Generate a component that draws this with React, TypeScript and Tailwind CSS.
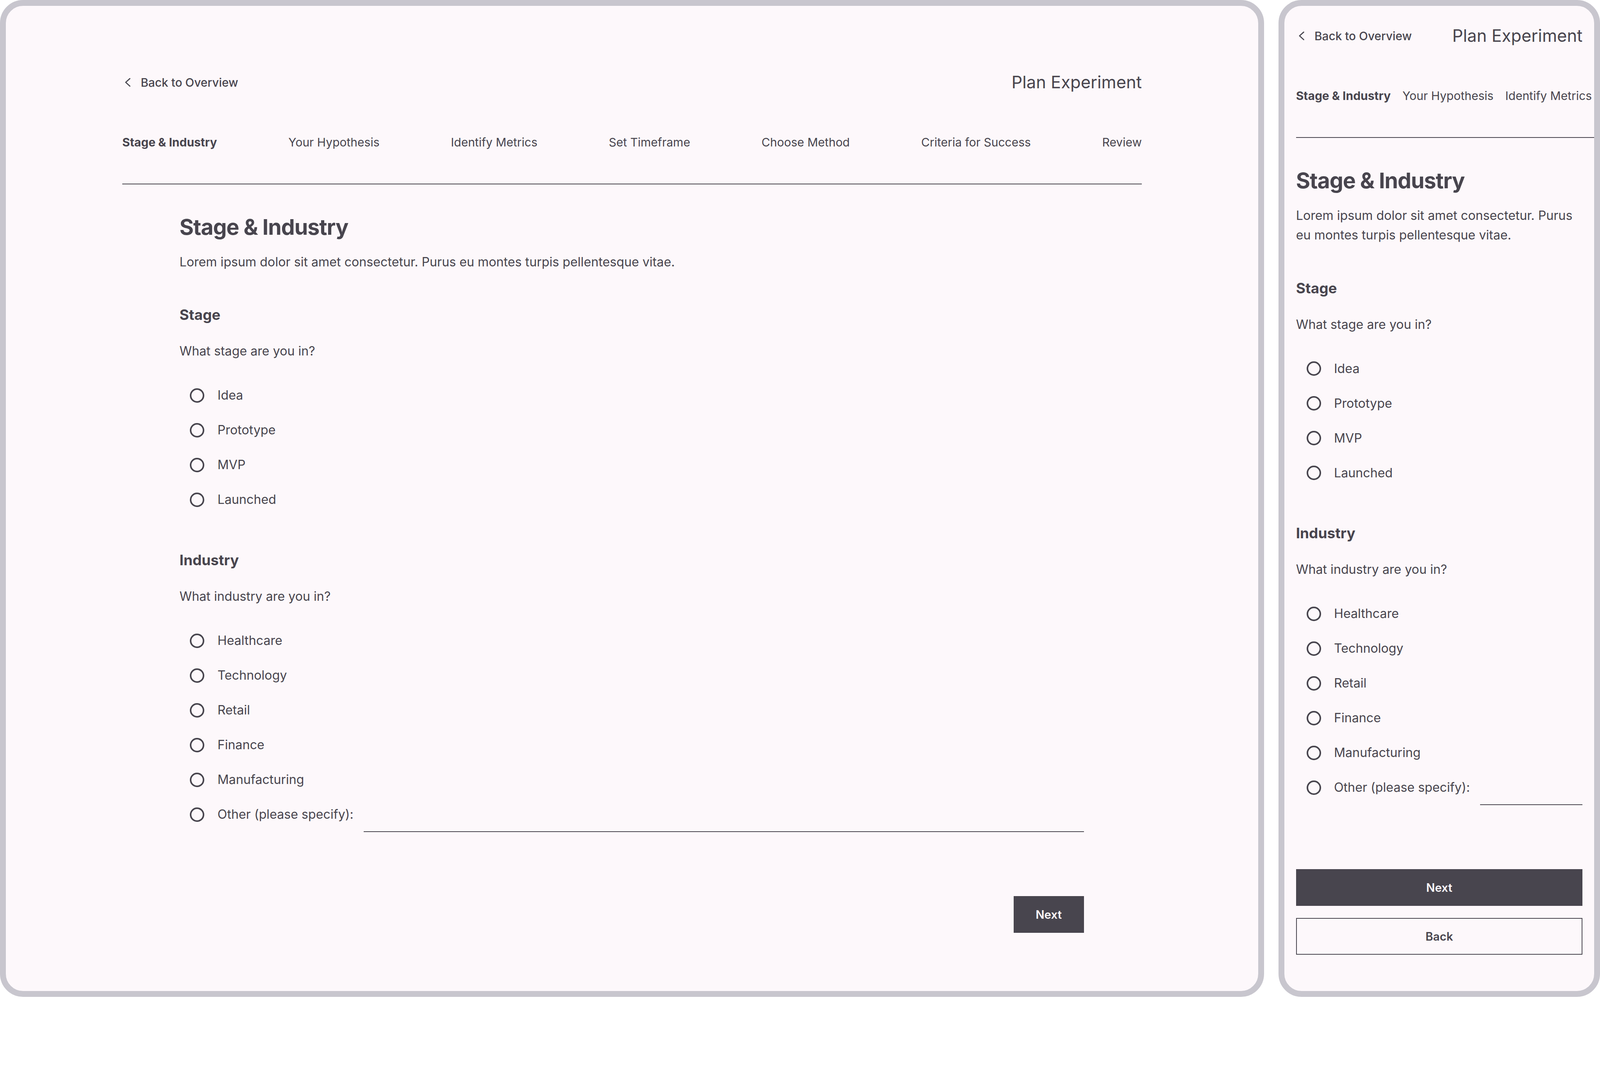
import React from "react";

const Chevron = () => (
  <svg width="29.7" height="29.7" viewBox="0 0 32 32" fill="none" className="shrink-0">
    <path d="M21 5.5 L9.5 16 L21 26.5" stroke="#48454e" strokeWidth="3" strokeLinecap="round" strokeLinejoin="round" />
  </svg>
);

const Radio = ({ label }: { label: string }) => (
  <div className="flex h-[89px] items-center pl-[26.9px]">
    <span className="h-[37px] w-[37px] shrink-0 rounded-full border-[4px] border-[#48454e]" />
    <span className="ml-[33.4px] text-[32.2px] leading-[50px]">{label}</span>
  </div>
);

const OtherRadio = () => (
  <div className="flex h-[89px] items-center pl-[26.9px]">
    <span className="h-[37px] w-[37px] shrink-0 rounded-full border-[4px] border-[#48454e]" />
    <span className="ml-[33.4px] shrink-0 text-[32.2px] leading-[50px]">Other (please specify):</span>
    <div className="ml-[26px] flex-1 self-stretch border-b-2 border-[#48454e]" />
  </div>
);

const tabs = [
  "Stage & Industry",
  "Your Hypothesis",
  "Identify Metrics",
  "Set Timeframe",
  "Choose Method",
  "Criteria for Success",
  "Review",
];

const Header = () => (
  <div className="flex h-[59px] items-center justify-between">
    <div className="flex items-center gap-[17.6px]">
      <Chevron />
      <span className="text-[29.8px] font-medium leading-[44px]">Back to Overview</span>
    </div>
    <span className="text-[43.5px] leading-[59px]">Plan Experiment</span>
  </div>
);

const FormBody = () => (
  <>
    <h1 className="mt-[76px] text-[55.6px] font-bold leading-[66.8px] tracking-[-0.02em]">
      Stage &amp; Industry
    </h1>
    <p className="mt-[31.6px] text-[32.2px] leading-[50px]">
      Lorem ipsum dolor sit amet consectetur. Purus eu montes turpis pellentesque vitae.
    </p>

    <h2 className="mt-[84.4px] text-[37px] font-bold leading-[52px]">Stage</h2>
    <p className="mt-[42px] text-[32.2px] leading-[50px]">What stage are you in?</p>
    <div className="mt-[43.5px] flex flex-col">
      {["Idea", "Prototype", "MVP", "Launched"].map((l) => (
        <Radio key={l} label={l} />
      ))}
    </div>

    <h2 className="mt-[84.4px] text-[37px] font-bold leading-[52px]">Industry</h2>
    <p className="mt-[42px] text-[32.2px] leading-[50px]">What industry are you in?</p>
    <div className="mt-[43.5px] flex flex-col">
      {["Healthcare", "Technology", "Retail", "Finance", "Manufacturing"].map((l) => (
        <Radio key={l} label={l} />
      ))}
      <OtherRadio />
    </div>
  </>
);

export default function App() {
  return (
    <div
      className="flex h-[2552px] w-screen gap-[37px] overflow-hidden bg-white text-[#48454e]"
      style={{ fontFamily: "Inter, 'Noto Sans', sans-serif" }}
    >
      {/* Desktop panel */}
      <div className="h-full min-w-0 flex-1 overflow-hidden rounded-[59px] border-[15px] border-[#c8c6ce] bg-[#fdf8fb]">
        <div className="mx-auto w-[2610px] pt-[166px]">
          <Header />
          <div className="mt-[101.5px] flex h-[44px] items-center justify-between text-[30px] leading-[44px]">
            {tabs.map((t, i) => (
              <span key={t} className={i === 0 ? "font-bold" : ""}>
                {t}
              </span>
            ))}
          </div>
          <div className="mt-[84px] h-[2px] bg-[#48454e]" />
          <div className="pl-[146.5px] pr-[148.4px]">
            <FormBody />
            <div className="mt-[164px] flex justify-end">
              <button className="h-[94.6px] w-[180px] bg-[#48454e] text-[29.5px] font-semibold text-[#fdf8fb]">
                Next
              </button>
            </div>
          </div>
        </div>
      </div>

      {/* Mobile panel */}
      <div className="h-full w-[823px] shrink-0 overflow-hidden rounded-[59px] border-[15px] border-[#c8c6ce] bg-[#fdf8fb]">
        <div className="pt-[47.3px]">
          <div className="px-[29.7px]">
            <Header />
          </div>
          <div className="ml-[29.7px] overflow-hidden">
            <div className="mt-[101.5px] flex h-[44px] items-center gap-[30px] whitespace-nowrap text-[30px] leading-[44px]">
              {tabs.slice(0, 3).map((t, i) => (
                <span key={t} className={i === 0 ? "shrink-0 font-bold" : "shrink-0"}>
                  {t}
                </span>
              ))}
            </div>
            <div className="mt-[84px] h-[2px] bg-[#48454e]" />
          </div>
          <div className="px-[29.7px]">
            <FormBody />
            <div className="mt-[164px] flex flex-col gap-[31.5px]">
              <button className="h-[93.7px] w-full bg-[#48454e] text-[29.5px] font-semibold text-[#fdf8fb]">
                Next
              </button>
              <button className="h-[93.7px] w-full border-2 border-[#48454e] text-[29.5px] font-semibold text-[#48454e]">
                Back
              </button>
            </div>
          </div>
        </div>
      </div>
    </div>
  );
}
